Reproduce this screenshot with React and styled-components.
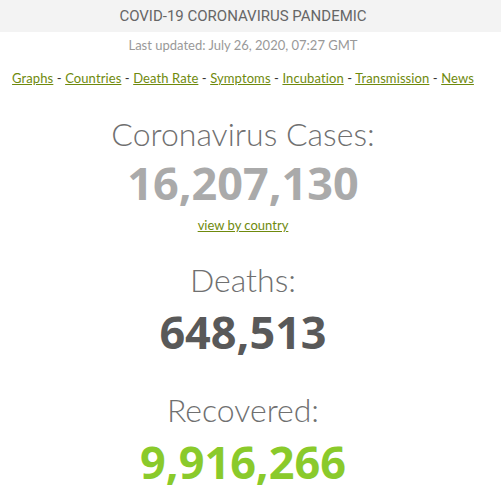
import React from "react";
import styled, { createGlobalStyle } from "styled-components";

const GlobalStyle = createGlobalStyle`
  html, body {
    margin: 0;
    padding: 0;
    background: #fff;
  }
`;

const Page = styled.div`
  padding-right: 15px;
  text-align: center;
`;

const Header = styled.div`
  height: 32px;
  line-height: 32px;
  margin-right: -15px;
  padding-right: 15px;
  background: #f3f3f3;
  font-family: Roboto, sans-serif;
  font-size: 15px;
  color: #666;
`;

const Updated = styled.div`
  margin-top: 3px;
  line-height: 20px;
  font-family: Lato, sans-serif;
  font-size: 13px;
  color: #999;
`;

const Nav = styled.nav`
  margin-top: 13px;
  line-height: 20px;
  font-family: Lato, sans-serif;
  font-size: 13px;
  letter-spacing: 0.1px;
  color: #333;
`;

const NavLink = styled.a`
  color: #6f8a0d;
  text-decoration: underline;
`;

const Counter = styled.div`
  margin-top: ${(p) => p.gap}px;
  display: flex;
  flex-direction: column;
  align-items: center;
`;

const Title = styled.h1`
  margin: 0;
  line-height: 40px;
  font-family: Lato, sans-serif;
  font-weight: 300;
  font-size: 32px;
  color: #707070;
`;

const Number = styled.div`
  margin-top: ${(p) => p.gap}px;
  line-height: 50px;
  font-family: "Open Sans", sans-serif;
  font-weight: 700;
  font-size: 45px;
  color: ${(p) => p.color};
`;

const SubLink = styled.a`
  margin-top: 7px;
  line-height: 20px;
  font-family: Lato, sans-serif;
  font-size: 13px;
  color: #6f8a0d;
  text-decoration: underline;
`;

const links = [
  "Graphs",
  "Countries",
  "Death Rate",
  "Symptoms",
  "Incubation",
  "Transmission",
  "News",
];

export default function App() {
  return (
    <Page>
      <GlobalStyle />
      <Header>COVID-19 CORONAVIRUS PANDEMIC</Header>
      <Updated>Last updated: July 26, 2020, 07:27 GMT</Updated>
      <Nav>
        {links.map((l, i) => (
          <React.Fragment key={l}>
            {i > 0 && " - "}
            <NavLink href="#">{l}</NavLink>
          </React.Fragment>
        ))}
      </Nav>
      <Counter gap={26}>
        <Title>Coronavirus Cases:</Title>
        <Number gap={4} color="#aaa">
          16,207,130
        </Number>
        <SubLink href="#">view by country</SubLink>
      </Counter>
      <Counter gap={25}>
        <Title>Deaths:</Title>
        <Number gap={7} color="#595959">
          648,513
        </Number>
      </Counter>
      <Counter gap={33}>
        <Title>Recovered:</Title>
        <Number gap={7} color="#8aca2b">
          9,916,266
        </Number>
      </Counter>
    </Page>
  );
}
